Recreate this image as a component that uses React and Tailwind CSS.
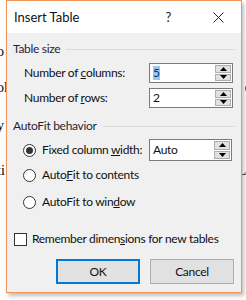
import React from "react";

function Spin({ value, selected, w = "w-[84px]", h = "h-[20px]" }) {
  return (
    <div className={`flex ${w} ${h} border border-[#7a7a7a] bg-white`}>
      <div className="flex-1 flex items-center pl-[3px]">
        {selected ? (
          <span className="bg-[#99c9ef] text-[#10316b] leading-[14px]">{value}</span>
        ) : (
          <span>{value}</span>
        )}
      </div>
      <div className="w-[17px] flex flex-col gap-[1px] p-[1px] pl-0">
        <div className="flex-1 bg-[#e1e1e1] border border-[#adadad] flex items-center justify-center">
          <svg width="7" height="4" viewBox="0 0 7 4"><path d="M3.5 0 L7 4 L0 4 Z" fill="#000" /></svg>
        </div>
        <div className="flex-1 bg-[#e1e1e1] border border-[#adadad] flex items-center justify-center">
          <svg width="7" height="4" viewBox="0 0 7 4"><path d="M0 0 L7 0 L3.5 4 Z" fill="#000" /></svg>
        </div>
      </div>
    </div>
  );
}

function Radio({ checked }) {
  return (
    <div className="w-[13px] h-[13px] rounded-full border border-[#333] bg-white flex items-center justify-center shrink-0">
      {checked && <div className="w-[7px] h-[7px] rounded-full bg-[#333]" />}
    </div>
  );
}

function Heading({ children }) {
  return (
    <div className="flex items-center gap-[6px] h-[14px]">
      <span className="text-[#1f1f3a] whitespace-nowrap">{children}</span>
      <div className="flex-1 h-px bg-[#dcdcdc]" />
    </div>
  );
}

export default function App() {
  const doc = [
    { h: "h-[36px]", l: "o", r: "I" },
    { h: "h-[38px]", l: "ol", r: "e" },
    { h: "h-[45px]", l: "y", r: "I" },
    { h: "h-[20px]", l: "ti", r: "LI" },
  ];
  return (
    <div
      className="relative w-[246px] h-[300px] bg-white overflow-hidden text-[12px] leading-[14px] tracking-[-0.3px] text-[#111] whitespace-nowrap"
      style={{ fontFamily: 'Lato, "Noto Sans", Arial, sans-serif' }}
    >
      <div className="flex flex-col pt-[44px] text-[14px] leading-[16px] tracking-normal text-black" style={{ fontFamily: '"Liberation Serif", serif' }}>
        {doc.map((d, i) => (
          <div key={i} className={`flex justify-between ${d.h}`}>
            <span className="-ml-[3px]">{d.l}</span>
            <span className="-mr-[5px]">{d.r}</span>
          </div>
        ))}
      </div>

      <div className="absolute left-[6px] top-0 w-[236px] h-[293px] border border-[#f0955a] bg-[#f0f0f0] flex flex-col shadow-[2px_3px_4px_rgba(0,0,0,0.25)]">
        <div className="h-[32px] bg-white flex items-center pl-[7px] shrink-0">
          <span className="text-[13px] tracking-normal text-[#111] flex-1">Insert Table</span>
          <span className="text-[13px] mr-[42px] text-[#222]">?</span>
          <svg width="11" height="11" viewBox="0 0 11 11" className="mr-[17px]">
            <path d="M0.5 0.5 L10.5 10.5 M10.5 0.5 L0.5 10.5" stroke="#222" strokeWidth="1" />
          </svg>
        </div>

        <div className="flex flex-col pl-[6px] pr-[6px] pt-[9px]">
          <Heading>Table size</Heading>

          <div className="flex flex-col gap-[5px] pl-[11px] mt-[7px]">
            <div className="flex items-center">
              <span className="w-[125px]">Number of <u>c</u>olumns:</span>
              <Spin value="5" selected />
            </div>
            <div className="flex items-center">
              <span className="w-[125px]">Number of <u>r</u>ows:</span>
              <Spin value="2" />
            </div>
          </div>

          <div className="mt-[11px]">
            <Heading>AutoFit behavior</Heading>
          </div>

          <div className="flex flex-col pl-[10px] mt-[6px]">
            <div className="flex items-center h-[22px]">
              <Radio checked />
              <span className="ml-[6px] w-[107px]">Fixed column <u>w</u>idth:</span>
              <Spin value="Auto" w="w-[83px]" h="h-[22px]" />
            </div>
            <div className="flex items-center h-[14px] mt-[7px]">
              <Radio />
              <span className="ml-[6px]">Auto<u>F</u>it to contents</span>
            </div>
            <div className="flex items-center h-[14px] mt-[13px]">
              <Radio />
              <span className="ml-[6px]">AutoFit to win<u>d</u>ow</span>
            </div>
          </div>

          <div className="flex items-center mt-[23px] pl-[1px] h-[14px]">
            <div className="w-[13px] h-[13px] border border-[#333] bg-white shrink-0" />
            <span className="ml-[5px]">Remember dimen<u>s</u>ions for new tables</span>
          </div>

          <div className="flex justify-end gap-[10px] mt-[13px] pr-[1px]">
            <button className="w-[84px] h-[25px] bg-[#e1e1e1] border-2 border-[#0078d7] text-[12px]">OK</button>
            <button className="w-[84px] h-[25px] bg-[#e1e1e1] border border-[#adadad] text-[12px]">Cancel</button>
          </div>
        </div>
      </div>
    </div>
  );
}
